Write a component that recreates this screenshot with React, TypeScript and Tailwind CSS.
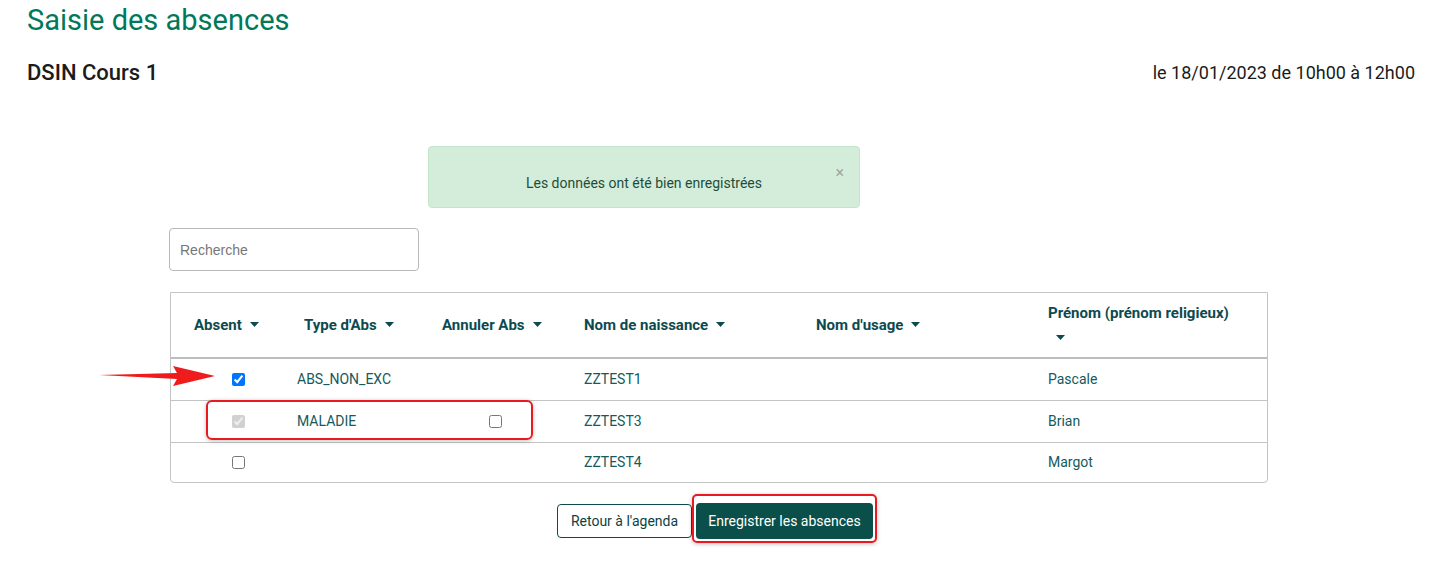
import React from 'react';

type Row = {
    absent: boolean;
    disabled?: boolean;
    type: string;
    annuler?: boolean;
    nom: string;
    usage: string;
    prenom: string;
};

const rows: Row[] = [
    { absent: true, type: 'ABS_NON_EXC', nom: 'ZZTEST1', usage: '', prenom: 'Pascale' },
    { absent: true, disabled: true, type: 'MALADIE', annuler: true, nom: 'ZZTEST3', usage: '', prenom: 'Brian' },
    { absent: false, type: '', nom: 'ZZTEST4', usage: '', prenom: 'Margot' },
];

const Caret = () => (
    <svg width="9" height="5" viewBox="0 0 9 5" className="inline-block ml-2 mb-[2px]">
        <path d="M0 0h9L4.5 5z" fill="#0d4a4f" />
    </svg>
);

const cols = 'grid grid-cols-[115px_140px_140px_235px_230px_1fr]';

export default function App() {
    return (
        <div className="min-h-screen bg-white font-['Roboto',sans-serif] text-[#1b1b1b]">
            {/* En-tete */}
            <div className="pl-[27px] pr-[16px] pt-[2px]">
                <h1 className="text-[29px] leading-[36px] text-[#00785a]">Saisie des absences</h1>
                <div className="mt-[18px] flex items-center justify-between">
                    <h2 className="text-[22px] font-medium">DSIN Cours 1</h2>
                    <p className="text-[18px]">le 18/01/2023 de 10h00 à 12h00</p>
                </div>
            </div>

            {/* Message */}
            <div className="mt-[57px] pl-[428px]">
                <div className="relative h-[62px] w-[432px] rounded border border-[#c3e6cb] bg-[#d4edda] pt-[26px] text-center text-[14px] text-[#1e4d3a]">
                    Les données ont été bien enregistrées
                    <span className="absolute right-[15px] top-[18px] text-[16px] leading-none text-[#9aa9a0]">×</span>
                </div>
            </div>

            <div className="relative ml-[169px] mt-[20px] w-[1099px]">
                <input
                    placeholder="Recherche"
                    className="h-[43px] w-[250px] rounded border border-[#b8b8b8] px-[10px] font-['Liberation_Sans',sans-serif] text-[14px] text-[#555] placeholder:text-[#777] outline-none"
                />

                {/* Tableau */}
                <div className="mt-[21px] ml-[1px] overflow-hidden rounded-b border border-[#c4c4c4]">
                    <div className={`${cols} h-[66px] items-center border-b-2 border-[#bdbdbd] text-[15px] font-bold text-[#0d4a4f]`}>
                        <div className="pl-[23px]">Absent<Caret /></div>
                        <div className="pl-[18px]">Type d'Abs<Caret /></div>
                        <div className="pl-[16px]">Annuler Abs<Caret /></div>
                        <div className="pl-[18px]">Nom de naissance<Caret /></div>
                        <div className="pl-[15px]">Nom d'usage<Caret /></div>
                        <div className="pl-[17px] leading-[24px]">
                            Prénom (prénom religieux)
                            <div><Caret /></div>
                        </div>
                    </div>
                    {rows.map((r, i) => (
                        <div
                            key={r.nom}
                            className={`${cols} items-center text-[14px] text-[#155a5c] ${i < rows.length - 1 ? 'h-[42px] border-b border-[#c4c4c4]' : 'h-[39px]'}`}
                        >
                            <div className="pl-[61px] flex">
                                <input type="checkbox" checked={r.absent} disabled={r.disabled} readOnly className="m-0 h-[13px] w-[13px]" />
                            </div>
                            <div className="pl-[11px]">{r.type}</div>
                            <div className="pl-[63px] flex">
                                {r.annuler && <input type="checkbox" readOnly className="m-0 h-[13px] w-[13px]" />}
                            </div>
                            <div className="pl-[18px]">{r.nom}</div>
                            <div className="pl-[15px]">{r.usage}</div>
                            <div className="pl-[17px]">{r.prenom}</div>
                        </div>
                    ))}
                </div>

                {/* Annotations */}
                <svg className="absolute left-[-70px] top-[136px]" width="120" height="24" viewBox="0 0 120 24">
                    <path d="M0 11 L78 9 L74 2 L116 12 L74 22 L78 15 Z" fill="#ee1c1c" />
                </svg>
                <div className="absolute left-[37px] top-[172px] h-[40px] w-[327px] rounded-[6px] border-2 border-[#e8191f] shadow-[0_1px_4px_rgba(0,0,0,0.25)]" />
            </div>

            {/* Boutons */}
            <div className="mt-[20px] flex pl-[557px]">
                <button className="mt-[1px] h-[34px] w-[135px] rounded border border-[#0d4a4f] text-[14px] text-[#0d3f43]">
                    Retour à l'agenda
                </button>
                <div className="-mt-[9px] h-[49px] rounded-[5px] border-2 border-[#e8191f] p-[2px] shadow-[0_1px_4px_rgba(0,0,0,0.25)]">
                    <button className="mt-[5px] h-[36px] w-[177px] rounded bg-[#0b4f4a] text-[14px] text-white">
                        Enregistrer les absences
                    </button>
                </div>
            </div>
        </div>
    );
}
